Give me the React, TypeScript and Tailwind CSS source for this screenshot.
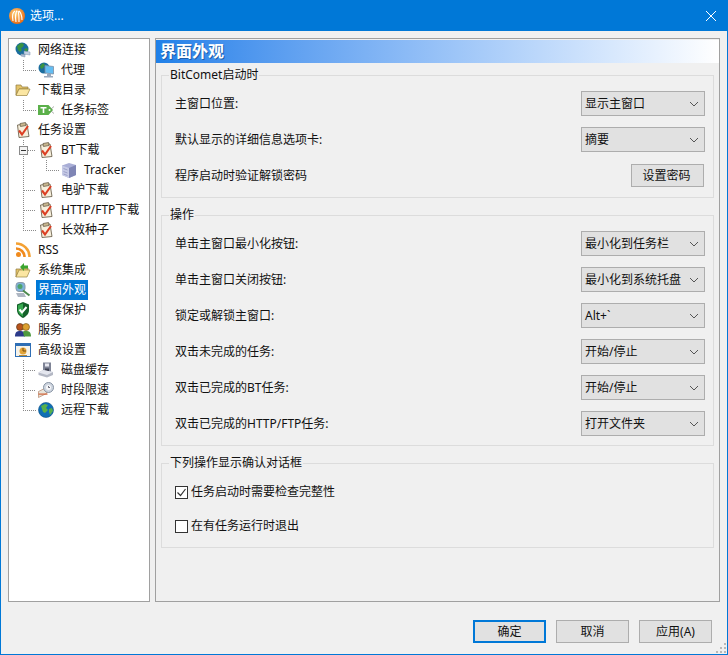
import React from 'react';

type Guide = 'pipe' | 'tee' | 'corner' | 'minus';
type IconName =
  | 'globe' | 'proxy' | 'folder' | 'tag' | 'task' | 'cube' | 'rss' | 'folderIn'
  | 'look' | 'shield' | 'people' | 'advanced' | 'disk' | 'clock' | 'earth';

const treeItems: { label: string; icon: IconName; guides?: Guide[]; selected?: boolean }[] = [
  { label: '网络连接', icon: 'globe' },
  { label: '代理', icon: 'proxy', guides: ['corner'] },
  { label: '下载目录', icon: 'folder' },
  { label: '任务标签', icon: 'tag', guides: ['corner'] },
  { label: '任务设置', icon: 'task' },
  { label: 'BT下载', icon: 'task', guides: ['minus'] },
  { label: 'Tracker', icon: 'cube', guides: ['pipe', 'corner'] },
  { label: '电驴下载', icon: 'task', guides: ['tee'] },
  { label: 'HTTP/FTP下载', icon: 'task', guides: ['tee'] },
  { label: '长效种子', icon: 'task', guides: ['corner'] },
  { label: 'RSS', icon: 'rss' },
  { label: '系统集成', icon: 'folderIn' },
  { label: '界面外观', icon: 'look', selected: true },
  { label: '病毒保护', icon: 'shield' },
  { label: '服务', icon: 'people' },
  { label: '高级设置', icon: 'advanced' },
  { label: '磁盘缓存', icon: 'disk', guides: ['tee'] },
  { label: '时段限速', icon: 'clock', guides: ['tee'] },
  { label: '远程下载', icon: 'earth', guides: ['corner'] },
];

function TreeGuide({ type }: { type: Guide }) {
  const dots = { stroke: '#8a8a8a', strokeDasharray: '1 1', shapeRendering: 'crispEdges' as const };
  return (
    <svg width="23" height="20" className="shrink-0">
      {type === 'pipe' && <line x1="8.5" y1="0" x2="8.5" y2="20" {...dots} />}
      {type === 'tee' && (
        <>
          <line x1="8.5" y1="0" x2="8.5" y2="20" {...dots} />
          <line x1="9" y1="10.5" x2="21" y2="10.5" {...dots} />
        </>
      )}
      {type === 'corner' && (
        <>
          <line x1="8.5" y1="0" x2="8.5" y2="10" {...dots} />
          <line x1="8" y1="10.5" x2="21" y2="10.5" {...dots} />
        </>
      )}
      {type === 'minus' && (
        <>
          <line x1="8.5" y1="0" x2="8.5" y2="20" {...dots} />
          <line x1="13" y1="10.5" x2="21" y2="10.5" {...dots} />
          <rect x="4.5" y="6.5" width="8" height="8" fill="#f4f4f4" stroke="#8a8a8a" shapeRendering="crispEdges" />
          <line x1="6" y1="10.5" x2="11" y2="10.5" stroke="#333" shapeRendering="crispEdges" />
        </>
      )}
    </svg>
  );
}

function TreeIcon({ name }: { name: IconName }) {
  const box = { width: 16, height: 16, viewBox: '0 0 16 16', className: 'shrink-0' };
  switch (name) {
    case 'globe':
      return (
        <svg {...box}>
          <circle cx="7" cy="7" r="6.5" fill="#1a6d9e" />
          <path d="M2 4l4-3 3 1-1 3-2 1 1 2-2 2-2-2zM9 7l3-1 1 2-2 3z" fill="#3a9440" />
          <path d="M9 9l6 1v3l-6-1z" fill="#c3d0e2" stroke="#7f93ad" strokeWidth="0.5" />
          <path d="M6 12l4 .5v2.500l-4-1z" fill="#aebcd0" stroke="#7f93ad" strokeWidth="0.5" />
        </svg>
      );
    case 'proxy':
      return (
        <svg {...box}>
          <circle cx="6" cy="6" r="5.500" fill="#1a6d9e" />
          <path d="M2 4l3-3 2 2-2 3-2 1z" fill="#3a9440" />
          <path d="M7 3.500l8.500 1v7.500L7 11z" fill="#63bdf2" stroke="#7d8ea3" strokeWidth="0.8" />
          <path d="M9 12h4v2H9zM6 14h9v1.500H6z" fill="#98a8bc" />
        </svg>
      );
    case 'folder':
      return (
        <svg {...box}>
          <path d="M1 3h5l1 2h6v2H4l-3 6z" fill="#e3c36a" stroke="#8f7a3d" strokeWidth="0.7" />
          <path d="M4 7h11l-3 6.500H1z" fill="#fbe6a2" stroke="#9a8440" strokeWidth="0.7" />
        </svg>
      );
    case 'tag':
      return (
        <svg {...box}>
          <path d="M0 3h10.500L15 8l-4.500 5H0z" fill="#5bb04a" />
          <path d="M2.500 5h6v1.500H6.300V11H4.700V6.500H2.500z" fill="#fff" />
          <circle cx="11.500" cy="8" r="1" fill="#fff" />
          <path d="M13 7l3-2.500M13 9l3 2.500" stroke="#8a8a8a" strokeWidth="0.7" />
        </svg>
      );
    case 'task':
      return (
        <svg {...box}>
          <path d="M2.500 3l9.500-1 2 12.500-10 1z" fill="#f7efdc" stroke="#6f6550" strokeWidth="0.9" />
          <path d="M5 1.500l5.500-1 .5 3-5.500 1z" fill="#c9b78f" stroke="#5f5540" strokeWidth="0.7" />
          <path d="M4 8.500l3 4 6-8.500" fill="none" stroke="#dc3f24" strokeWidth="2.100" />
        </svg>
      );
    case 'cube':
      return (
        <svg {...box}>
          <path d="M1 3.500L8 1l7 2v10l-7 3-7-3z" fill="#a9aed6" />
          <path d="M1 3.500L8 6v10l-7-3z" fill="#c7cbe6" />
          <path d="M8 6l7-3v10l-7 3z" fill="#7f85b5" />
          <path d="M2.500 6.500l4 1.500M2.500 9.500l4 1.500M2.500 12l4 1.500" stroke="#8f94bf" strokeWidth="0.8" />
        </svg>
      );
    case 'rss':
      return (
        <svg {...box}>
          <circle cx="3.500" cy="12.500" r="2.500" fill="#f08a1d" />
          <path d="M1 6.500a8.500 8.500 0 0 1 8.500 8.500" fill="none" stroke="#f08a1d" strokeWidth="2.600" />
          <path d="M1 1.500A13.500 13.500 0 0 1 14.500 15" fill="none" stroke="#f4a133" strokeWidth="2.600" />
        </svg>
      );
    case 'folderIn':
      return (
        <svg {...box}>
          <path d="M1 7h5l1-1h6v3H4l-3 6z" fill="#e3c36a" stroke="#8f7a3d" strokeWidth="0.7" />
          <path d="M4 8h11l-3 7H1z" fill="#fbe6a2" stroke="#9a8440" strokeWidth="0.7" />
          <path d="M5 5l4-4v2.500h4V6.500H9V9z" fill="#3ba52f" />
        </svg>
      );
    case 'look':
      return (
        <svg {...box}>
          <rect x="1" y="0.500" width="9" height="9" rx="3" fill="#7fb2da" stroke="#8a9aaa" />
          <circle cx="5" cy="4.500" r="2.500" fill="#4da36b" />
          <path d="M8 8.500l6.500 5" stroke="#4d8a4d" strokeWidth="2" />
          <path d="M1 11h8l2 4H3z" fill="#aeb6c2" />
        </svg>
      );
    case 'shield':
      return (
        <svg {...box}>
          <path d="M8 0l6 2.500V8c0 4-3 6.500-6 8-3-1.500-6-4-6-8V2.500z" fill="#14602a" />
          <path d="M8 1.500v13c-2.500-1.300-5-3.500-5-6.500V3.300z" fill="#37a94f" />
          <path d="M4.500 7.500L7 10.500 11.500 5" fill="none" stroke="#fff" strokeWidth="2" />
        </svg>
      );
    case 'people':
      return (
        <svg {...box}>
          <circle cx="5" cy="5" r="3.500" fill="#b8541c" stroke="#4a2a10" strokeWidth="0.6" />
          <circle cx="11" cy="5" r="3.500" fill="#dca030" stroke="#6a4a10" strokeWidth="0.6" />
          <path d="M0 14.500c0-4.500 2-5.500 5-5.500s5 1 5 5.500z" fill="#2c3a8a" />
          <path d="M8 9.500c1-.5 2-.5 3-.5 3 0 5 1 5 5.500H9z" fill="#4f9a3f" />
        </svg>
      );
    case 'advanced':
      return (
        <svg {...box}>
          <rect x="0.500" y="1.500" width="15" height="13" fill="#f6f3ea" stroke="#2f6fb5" />
          <rect x="0.500" y="1.500" width="15" height="2.500" fill="#2f6fb5" />
          <circle cx="8" cy="9" r="3.500" fill="#e2a53a" />
          <path d="M8 6v3h3" fill="none" stroke="#7a4d10" />
          <path d="M4 13h8v1H4z" fill="#b58a3a" />
        </svg>
      );
    case 'disk':
      return (
        <svg {...box}>
          <path d="M5 0.500h8v9.500H5z" fill="#7f8496" />
          <path d="M7 1.500h4v3H7z" fill="#e8e8f0" />
          <path d="M7 6.500h4v3.500H7z" fill="#3f4252" />
          <path d="M0.500 10.500l4.500-2.500 10 2v3l-6 2.500-8.500-2.500z" fill="#b4b8c4" />
          <path d="M0.500 10.500l8.500 2.500 6-3-10-2z" fill="#e4e6ee" />
        </svg>
      );
    case 'clock':
      return (
        <svg {...box}>
          <path d="M0.500 9.500l8-4v6l-8 4z" fill="#e9e4da" stroke="#b5866a" strokeWidth="0.7" />
          <path d="M0.500 11.500h9v1.200h-9z" fill="#d0643a" />
          <circle cx="10.500" cy="5.500" r="5" fill="#cfd6e0" stroke="#8793a3" />
          <circle cx="10.500" cy="5.500" r="2.500" fill="#f7f8fa" />
          <path d="M10.500 4v1.500H12" fill="none" stroke="#445" strokeWidth="0.8" />
        </svg>
      );
    case 'earth':
      return (
        <svg {...box}>
          <circle cx="8" cy="8" r="7.500" fill="#0f6fb5" />
          <circle cx="8" cy="8" r="7.500" fill="none" stroke="#0a4d85" strokeWidth="0.6" />
          <path d="M3 4l4-2 3 1-2 3 2 2-3 3-2-1-1-3zM11 7l3-1 1 3-3 4-1-3z" fill="#58b04a" />
        </svg>
      );
  }
}

function TreeRow({ label, icon, guides = [], selected }: (typeof treeItems)[number]) {
  return (
    <div className="flex h-5 items-center">
      {guides.map((g, i) => (
        <TreeGuide key={i} type={g} />
      ))}
      <TreeIcon name={icon} />
      <span
        className={`ml-[5px] h-5 whitespace-nowrap px-[2px] leading-5 ${
          selected ? 'bg-[#0078d7] text-white' : 'text-[#111]'
        }`}
      >
        {label}
      </span>
    </div>
  );
}

function Select({ value }: { value: string }) {
  return (
    <div className="-mt-px flex h-[25px] w-[124px] items-center justify-between border border-[#adadad] bg-[#e1e1e1] pl-[3px] pr-[5px] text-[#111]">
      <span className="whitespace-nowrap">{value}</span>
      <svg width="10" height="6" viewBox="0 0 10 6" className="shrink-0">
        <path d="M1 1l4 4 4-4" fill="none" stroke="#555" strokeWidth="1" />
      </svg>
    </div>
  );
}

function Row({ label, children }: { label: string; children: React.ReactNode }) {
  return (
    <div className="flex h-9 items-center justify-between pl-[13px] pr-2 text-[#111]">
      <span>{label}</span>
      {children}
    </div>
  );
}

function Check({ label, checked }: { label: string; checked?: boolean }) {
  return (
    <div className="flex h-[34px] items-center pl-[13px] text-[#111]">
      <span className="flex h-[13px] w-[13px] items-center justify-center border border-[#333] bg-white">
        {checked && (
          <svg width="11" height="11" viewBox="0 0 11 11">
            <path d="M1.500 5.500L4.500 8.500 9.500 2" fill="none" stroke="#333" strokeWidth="1.200" />
          </svg>
        )}
      </span>
      <span className="ml-[3px]">{label}</span>
    </div>
  );
}

function Group({ title, className, children }: { title: string; className: string; children: React.ReactNode }) {
  return (
    <fieldset className={`mx-[5px] border border-[#dcdcdc] ${className}`}>
      <legend className="ml-[7px] px-px leading-4 text-[#111]">{title}</legend>
      {children}
    </fieldset>
  );
}

function Button({ label, primary }: { label: string; primary?: boolean }) {
  return (
    <div
      className={`flex h-[23px] w-[73px] items-center justify-center bg-[#e1e1e1] text-[#111] ${
        primary ? 'border-2 border-[#0078d7]' : 'border border-[#adadad]'
      }`}
    >
      {label}
    </div>
  );
}

export default function App() {
  return (
    <div className="relative flex h-[655px] w-[728px] flex-col overflow-hidden border-x border-b border-[#0078d7] bg-[#f0f0f0] font-['Noto_Sans','Noto_Sans_CJK_SC',sans-serif] text-xs leading-4">
      {/* Title bar */}
      <header className="flex h-[31px] shrink-0 items-center bg-[#0078d7] pl-2 pr-[10px] text-white">
        <svg width="16" height="16" viewBox="0 0 16 16" className="shrink-0">
          <defs>
            <radialGradient id="comet" cx="40%" cy="35%" r="70%">
              <stop offset="0%" stopColor="#ffd27a" />
              <stop offset="100%" stopColor="#e8640c" />
            </radialGradient>
          </defs>
          <circle cx="8" cy="8" r="8" fill="url(#comet)" />
          <path d="M4 13C3 8 4 4 6 3M7 14C6 9 7 4 8 2.500M10 14c0-5 0-9-1-11M13 12c0-4-1-7-3-9" fill="none" stroke="#fff" strokeWidth="1.100" />
        </svg>
        <span className="ml-[5px]">选项...</span>
        <svg width="12" height="12" viewBox="0 0 12 12" className="ml-auto">
          <path d="M1 1l10 10M11 1L1 11" stroke="#fff" strokeWidth="1" />
        </svg>
      </header>

      {/* Panels */}
      <main className="flex h-[571px] shrink-0 gap-[5px] pl-[7px] pt-[7px]">
        <aside className="h-[564px] w-[142px] shrink-0 border border-[#a0a0a0] bg-white pl-[6px] pt-px">
          {treeItems.map((item) => (
            <TreeRow key={item.label + item.icon} {...item} />
          ))}
        </aside>

        <section className="h-[564px] w-[565px] shrink-0 border border-[#a0a0a0] pt-px">
          <h1 className="h-[23px] bg-gradient-to-r from-[#1f80e8] to-white pl-1 text-base font-bold leading-[23px] text-white [text-shadow:1px_1px_0_#1d5ea8]">
            界面外观
          </h1>

          <Group title="BitComet启动时" className="mt-1 pb-[3px] pt-[3px]">
            <Row label="主窗口位置:">
              <Select value="显示主窗口" />
            </Row>
            <Row label="默认显示的详细信息选项卡:">
              <Select value="摘要" />
            </Row>
            <Row label="程序启动时验证解锁密码">
              <div className="-mt-px mr-px flex h-[23px] w-[73px] items-center justify-center border border-[#adadad] bg-[#e1e1e1] pr-[2px]">
                设置密码
              </div>
            </Row>
          </Group>

          <Group title="操作" className="mt-[9px] pb-[3px] pt-[3px]">
            <Row label="单击主窗口最小化按钮:">
              <Select value="最小化到任务栏" />
            </Row>
            <Row label="单击主窗口关闭按钮:">
              <Select value="最小化到系统托盘" />
            </Row>
            <Row label="锁定或解锁主窗口:">
              <Select value="Alt+`" />
            </Row>
            <Row label="双击未完成的任务:">
              <Select value="开始/停止" />
            </Row>
            <Row label="双击已完成的BT任务:">
              <Select value="开始/停止" />
            </Row>
            <Row label="双击已完成的HTTP/FTP任务:">
              <Select value="打开文件夹" />
            </Row>
          </Group>

          <Group title="下列操作显示确认对话框" className="mt-[9px] pb-1 pt-1">
            <Check label="任务启动时需要检查完整性" checked />
            <Check label="在有任务运行时退出" />
          </Group>
        </section>
      </main>

      {/* Footer */}
      <footer className="flex justify-end gap-[10px] pr-[15px] pt-[18px]">
        <Button label="确定" primary />
        <Button label="取消" />
        <Button label="应用(A)" />
      </footer>

      {/* Size grip */}
      <svg width="10" height="10" viewBox="0 0 10 10" className="absolute bottom-px right-px">
        <path d="M8 0h2v2H8zM4 4h2v2H4zM8 4h2v2H8zM0 8h2v2H0zM4 8h2v2H4zM8 8h2v2H8z" fill="#b8b8b8" />
      </svg>
    </div>
  );
}
